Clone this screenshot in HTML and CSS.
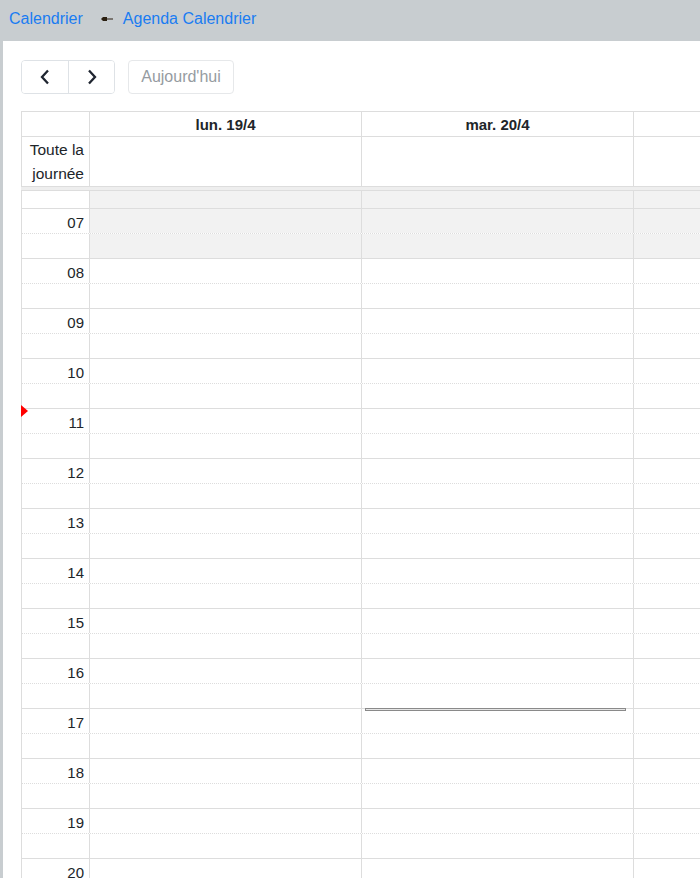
FILE: index.html
```html
<!DOCTYPE html>
<html lang="fr">
<head>
<meta charset="utf-8">
<title>Agenda Calendrier</title>
<link rel="stylesheet" href="styles.css">
</head>
<body>
<div class="topbar">
  <a class="crumb" href="#">Calendrier</a>
  <svg class="sep" width="12" height="6" viewBox="0 0 12 6"><path d="M0 3 L2 1 H6 V2.5 H12 V3.5 H6 V5 H2 Z" fill="#2a1f10"/></svg>
  <a class="crumb" href="#">Agenda Calendrier</a>
</div>
<div class="main">
  <div class="toolbar">
    <div class="btn-group">
      <button class="btn nav"><svg width="12" height="16" viewBox="0 0 12 16"><path d="M9 1.5 L3 8 L9 14.5" fill="none" stroke="#1f2530" stroke-width="2.3"/></svg></button>
      <button class="btn nav"><svg width="12" height="16" viewBox="0 0 12 16"><path d="M3 1.5 L9 8 L3 14.5" fill="none" stroke="#1f2530" stroke-width="2.3"/></svg></button>
    </div>
    <button class="btn today" disabled>Aujourd'hui</button>
  </div>
  <div class="cal">
    <div class="row head">
      <div class="cell axis"></div>
      <div class="cell day">lun. 19/4</div>
      <div class="cell day">mar. 20/4</div>
      <div class="cell day"></div>
    </div>
    <div class="row allday">
      <div class="cell axis">Toute la<br>journée</div>
      <div class="cell day"></div>
      <div class="cell day"></div>
      <div class="cell day"></div>
    </div>
    <div class="divider"></div>
    <div class="slots">
      <div class="row slot first off"><div class="cell axis"></div><div class="cell day"></div><div class="cell day"></div><div class="cell day"></div></div>
      <div class="row slot hour off"><div class="cell axis">07</div><div class="cell day"></div><div class="cell day"></div><div class="cell day"></div></div>
      <div class="row slot half off"><div class="cell axis"></div><div class="cell day"></div><div class="cell day"></div><div class="cell day"></div></div>
      <div class="row slot hour"><div class="cell axis">08</div><div class="cell day"></div><div class="cell day"></div><div class="cell day"></div></div>
      <div class="row slot half"><div class="cell axis"></div><div class="cell day"></div><div class="cell day"></div><div class="cell day"></div></div>
      <div class="row slot hour"><div class="cell axis">09</div><div class="cell day"></div><div class="cell day"></div><div class="cell day"></div></div>
      <div class="row slot half"><div class="cell axis"></div><div class="cell day"></div><div class="cell day"></div><div class="cell day"></div></div>
      <div class="row slot hour"><div class="cell axis">10</div><div class="cell day"></div><div class="cell day"></div><div class="cell day"></div></div>
      <div class="row slot half"><div class="cell axis"></div><div class="cell day"></div><div class="cell day"></div><div class="cell day"></div></div>
      <div class="row slot hour"><div class="cell axis">11</div><div class="cell day"></div><div class="cell day"></div><div class="cell day"></div></div>
      <div class="row slot half"><div class="cell axis"></div><div class="cell day"></div><div class="cell day"></div><div class="cell day"></div></div>
      <div class="row slot hour"><div class="cell axis">12</div><div class="cell day"></div><div class="cell day"></div><div class="cell day"></div></div>
      <div class="row slot half"><div class="cell axis"></div><div class="cell day"></div><div class="cell day"></div><div class="cell day"></div></div>
      <div class="row slot hour"><div class="cell axis">13</div><div class="cell day"></div><div class="cell day"></div><div class="cell day"></div></div>
      <div class="row slot half"><div class="cell axis"></div><div class="cell day"></div><div class="cell day"></div><div class="cell day"></div></div>
      <div class="row slot hour"><div class="cell axis">14</div><div class="cell day"></div><div class="cell day"></div><div class="cell day"></div></div>
      <div class="row slot half"><div class="cell axis"></div><div class="cell day"></div><div class="cell day"></div><div class="cell day"></div></div>
      <div class="row slot hour"><div class="cell axis">15</div><div class="cell day"></div><div class="cell day"></div><div class="cell day"></div></div>
      <div class="row slot half"><div class="cell axis"></div><div class="cell day"></div><div class="cell day"></div><div class="cell day"></div></div>
      <div class="row slot hour"><div class="cell axis">16</div><div class="cell day"></div><div class="cell day"></div><div class="cell day"></div></div>
      <div class="row slot half"><div class="cell axis"></div><div class="cell day"></div><div class="cell day"></div><div class="cell day"></div></div>
      <div class="row slot hour"><div class="cell axis">17</div><div class="cell day"></div><div class="cell day"></div><div class="cell day"></div></div>
      <div class="row slot half"><div class="cell axis"></div><div class="cell day"></div><div class="cell day"></div><div class="cell day"></div></div>
      <div class="row slot hour"><div class="cell axis">18</div><div class="cell day"></div><div class="cell day"></div><div class="cell day"></div></div>
      <div class="row slot half"><div class="cell axis"></div><div class="cell day"></div><div class="cell day"></div><div class="cell day"></div></div>
      <div class="row slot hour"><div class="cell axis">19</div><div class="cell day"></div><div class="cell day"></div><div class="cell day"></div></div>
      <div class="row slot half"><div class="cell axis"></div><div class="cell day"></div><div class="cell day"></div><div class="cell day"></div></div>
      <div class="row slot hour"><div class="cell axis">20</div><div class="cell day"></div><div class="cell day"></div><div class="cell day"></div></div>
      <div class="row slot half"><div class="cell axis"></div><div class="cell day"></div><div class="cell day"></div><div class="cell day"></div></div>
      <div class="now-arrow"></div>
      <div class="event"></div>
    </div>
  </div>
</div>
</body>
</html>
```

FILE: styles.css
```css
html, body {
  margin: 0;
  padding: 0;
  height: 100%;
  overflow: hidden;
}
body {
  background: #c8cdd0;
  font-family: "Liberation Sans", Arial, sans-serif;
  color: #212529;
}
.topbar {
  height: 41px;
  display: flex;
  align-items: center;
  padding-left: 9px;
  box-sizing: border-box;
}
.crumb {
  color: #1a7cf2;
  text-decoration: none;
  font-size: 16px;
  line-height: 20px;
  margin-top: -4px;
}
.sep {
  margin: -4px 10px 0 18px;
}
.main {
  margin-left: 3px;
  background: #fff;
  height: calc(100% - 41px);
  padding: 19px 0 0 18px;
  box-sizing: border-box;
  overflow: hidden;
}
.toolbar {
  display: flex;
  gap: 13px;
  height: 34px;
  margin-bottom: 17px;
}
.btn-group {
  display: flex;
  border: 1px solid #dee2e6;
  border-radius: 4px;
  overflow: hidden;
}
.btn {
  font-family: inherit;
  background: #fff;
  border: 0;
  padding: 0;
  margin: 0;
  display: flex;
  align-items: center;
  justify-content: center;
}
.nav {
  width: 46px;
  height: 32px;
}
.nav + .nav {
  border-left: 1px solid #dee2e6;
}
.today {
  width: 106px;
  height: 34px;
  box-sizing: border-box;
  border: 1px solid #e6e8ea;
  border-radius: 4px;
  color: #959ba1;
  font-size: 16px;
}
.cal {
  width: 890px;
}
.row {
  display: flex;
}
.cell {
  box-sizing: border-box;
  border-left: 1px solid #ddd;
  flex: none;
}
.axis {
  width: 68px;
}
.day {
  width: 272px;
}
.head {
  border-top: 1px solid #ddd;
  border-bottom: 1px solid #ddd;
}
.head .cell {
  height: 24px;
  font-size: 15px;
  font-weight: bold;
  text-align: center;
  line-height: 26px;
}
.allday .cell {
  height: 49px;
}
.allday .axis {
  font-size: 15.5px;
  line-height: 24px;
  text-align: right;
  padding: 1px 5px 0 0;
}
.divider {
  height: 3px;
  background: #eee;
  border-top: 1px solid #ddd;
  border-bottom: 1px solid #ddd;
}
.slots {
  position: relative;
}
.slot .cell {
  height: 25px;
  font-size: 15px;
  text-align: right;
  line-height: 27px;
}
.slot .axis {
  padding-right: 5px;
}
.slot.hour {
  border-top: 1px solid #ddd;
}
.slot.half {
  border-top: 1px dotted #ddd;
}
.slot.hour .cell,
.slot.half .cell {
  height: 24px;
}
.slot.first .cell {
  height: 17px;
}
.slot.off .day {
  background: #f2f2f2;
}
.now-arrow {
  position: absolute;
  left: 0;
  top: 214px;
  width: 0;
  height: 0;
  border-top: 6px solid transparent;
  border-bottom: 6px solid transparent;
  border-left: 7px solid #f00;
}
.event {
  position: absolute;
  left: 344px;
  top: 517px;
  width: 261px;
  height: 3px;
  box-sizing: border-box;
  border: 1px solid #8a8a8a;
  background: #e6e6e6;
}
```
